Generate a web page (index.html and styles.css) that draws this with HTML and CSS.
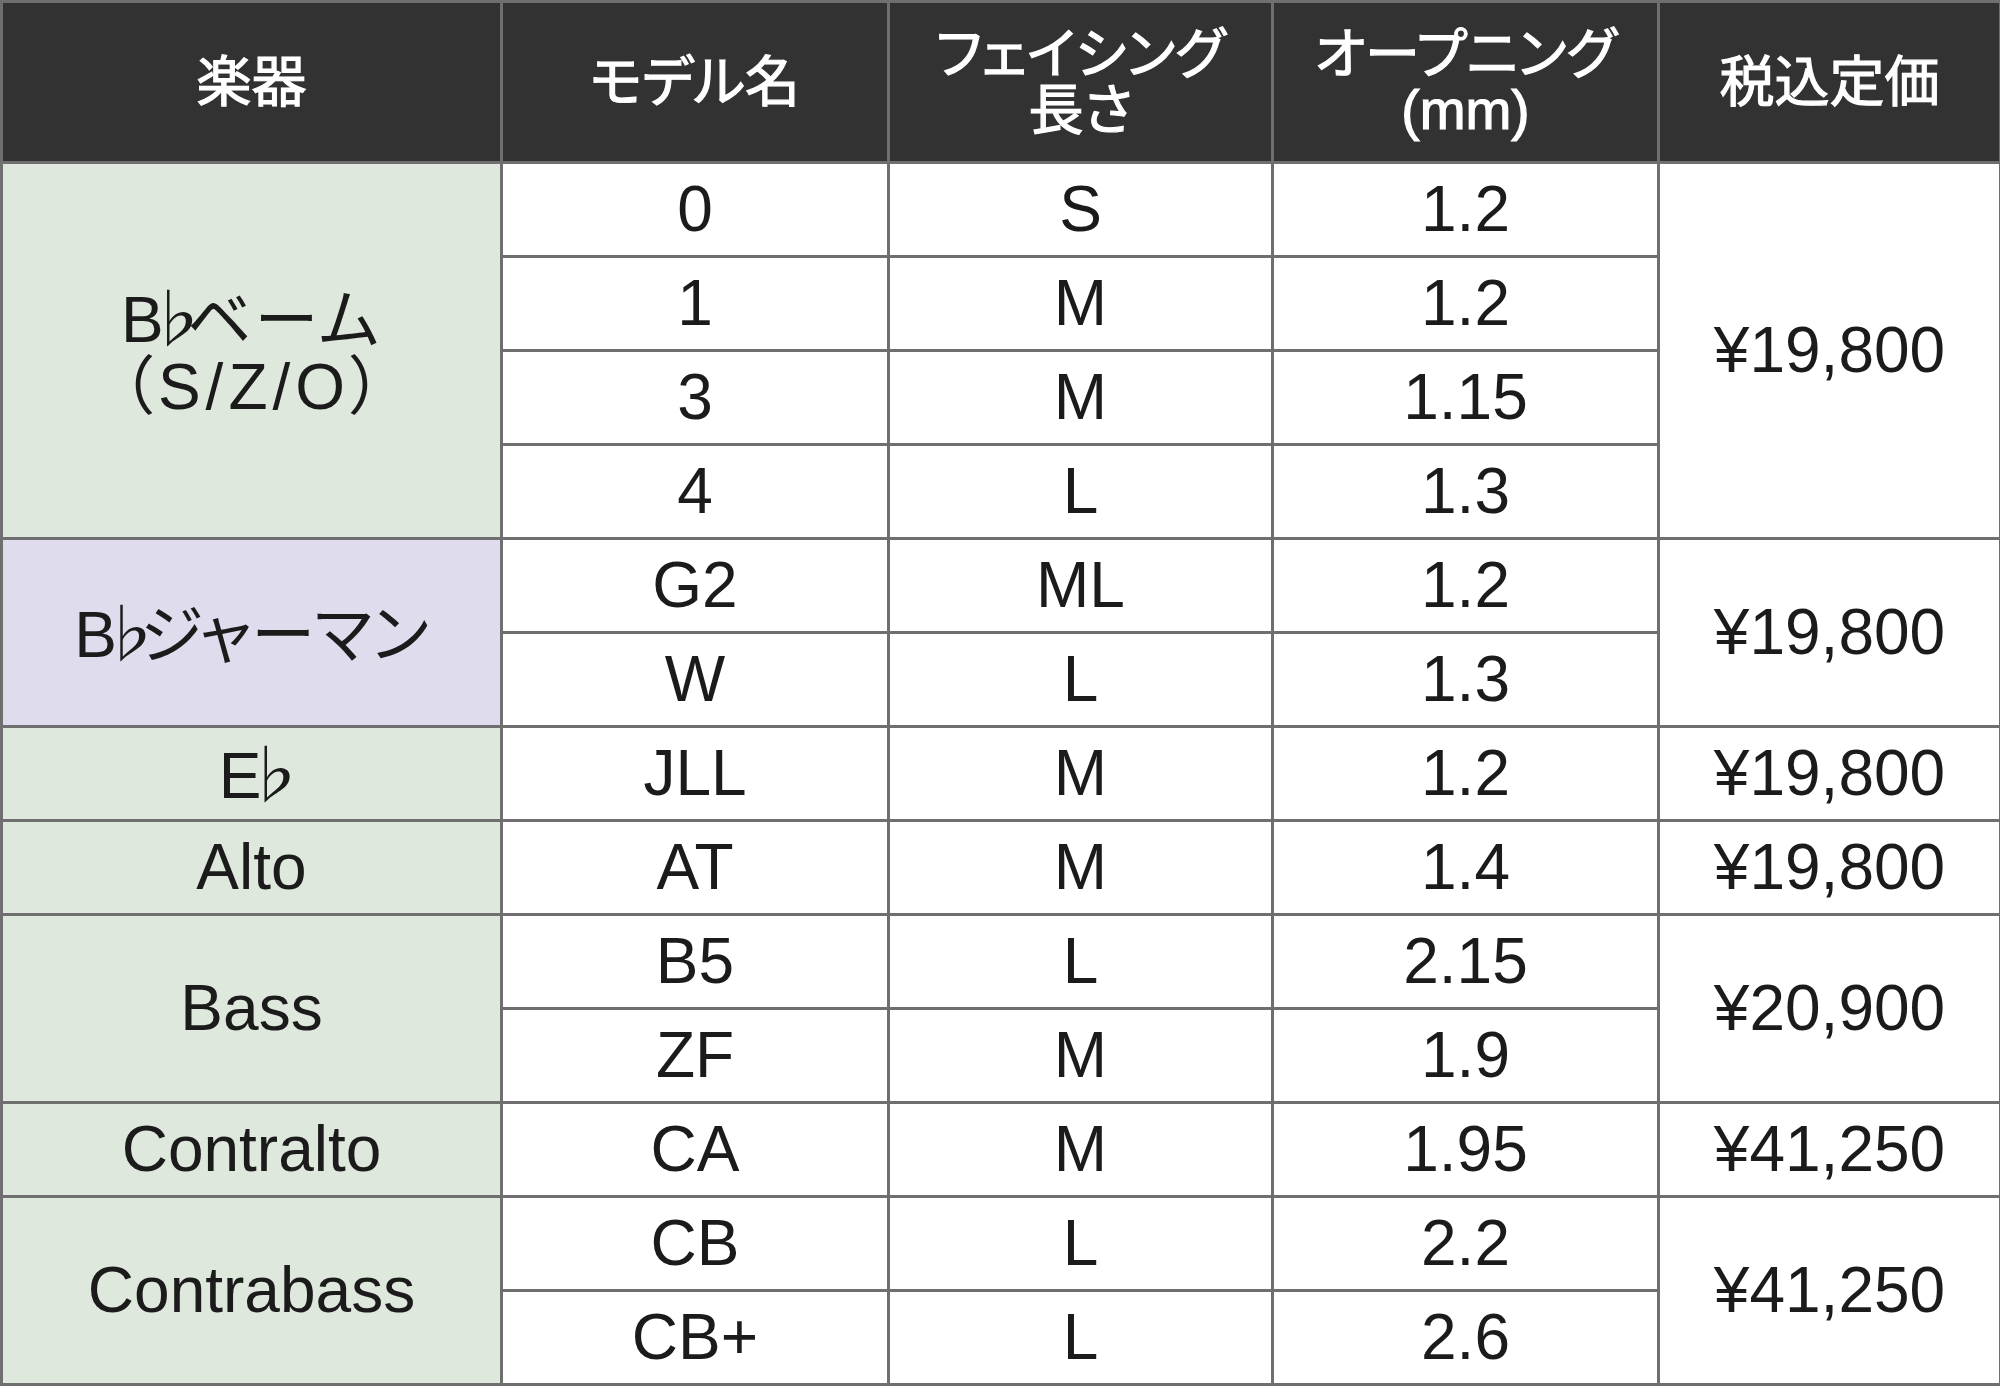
FILE: index.html
```html
<!DOCTYPE html>
<html lang="ja">
<head>
<meta charset="utf-8">
<title>マウスピース一覧</title>
<link rel="stylesheet" href="styles.css">
</head>
<body>
<table class="spec">
  <colgroup>
    <col class="c1"><col class="c2"><col class="c3"><col class="c4"><col class="c5">
  </colgroup>
  <thead>
    <tr class="head">
      <th>楽器</th>
      <th>モデル名</th>
      <th>フェイシング<br>長さ</th>
      <th>オープニング<br><span class="lat">(mm)</span></th>
      <th>税込定価</th>
    </tr>
  </thead>
  <tbody>
    <tr>
      <td rowspan="4" class="inst green"><span class="key">B</span><span class="flat">♭</span><span class="kana">ベーム</span><br><span class="paren">（S/Z/O）</span></td>
      <td>0</td><td>S</td><td>1.2</td>
      <td rowspan="4">¥19,800</td>
    </tr>
    <tr><td>1</td><td>M</td><td>1.2</td></tr>
    <tr><td>3</td><td>M</td><td>1.15</td></tr>
    <tr><td>4</td><td>L</td><td>1.3</td></tr>
    <tr>
      <td rowspan="2" class="inst purple"><span class="key">B</span><span class="flat">♭</span>ジャーマン</td>
      <td>G2</td><td>ML</td><td>1.2</td>
      <td rowspan="2">¥19,800</td>
    </tr>
    <tr><td>W</td><td>L</td><td>1.3</td></tr>
    <tr>
      <td class="inst green"><span class="key">E</span><span class="flat">♭</span></td>
      <td>JLL</td><td>M</td><td>1.2</td><td>¥19,800</td>
    </tr>
    <tr>
      <td class="inst green">Alto</td>
      <td>AT</td><td>M</td><td>1.4</td><td>¥19,800</td>
    </tr>
    <tr>
      <td rowspan="2" class="inst green">Bass</td>
      <td>B5</td><td>L</td><td>2.15</td>
      <td rowspan="2">¥20,900</td>
    </tr>
    <tr><td>ZF</td><td>M</td><td>1.9</td></tr>
    <tr>
      <td class="inst green">Contralto</td>
      <td>CA</td><td>M</td><td>1.95</td><td>¥41,250</td>
    </tr>
    <tr>
      <td rowspan="2" class="inst green">Contrabass</td>
      <td>CB</td><td>L</td><td>2.2</td>
      <td rowspan="2">¥41,250</td>
    </tr>
    <tr><td>CB+</td><td>L</td><td>2.6</td></tr>
  </tbody>
</table>
</body>
</html>
```
FILE: styles.css
```css
html, body {
  margin: 0;
  padding: 0;
  background: #ffffff;
}

.spec {
  border-collapse: collapse;
  table-layout: fixed;
  width: 1999px;
  border: 3px solid #6f6f6f;
  font-family: "Liberation Sans", "Noto Sans CJK JP", sans-serif;
  font-feature-settings: "palt";
  color: #1b1b1b;
}

.c1 { width: 500px; }
.c2 { width: 387px; }
.c3 { width: 384px; }
.c4 { width: 386px; }
.c5 { width: 342px; }

.spec th,
.spec td {
  border: 3px solid #6f6f6f;
  text-align: center;
  vertical-align: middle;
  padding: 0;
}

.head {
  height: 161px;
}

.head th {
  background: #323232;
  color: #ffffff;
  font-family: "Liberation Sans", "Noto Sans CJK JP", sans-serif;
  font-weight: 400;
  font-size: 55px;
  line-height: 56px;
  -webkit-text-stroke: 1.2px #ffffff;
}

.spec tbody tr {
  height: 94px;
}

.spec td {
  font-size: 64px;
  line-height: 67px;
  font-weight: 400;
}

.green {
  background: #dfe8dd;
}

.purple {
  background: #dfdcee;
}

.key {
  letter-spacing: -19px;
}

.flat {
  font-family: "Noto Sans CJK JP", sans-serif;
  font-weight: 400;
  letter-spacing: -22px;
}

.kana {
  letter-spacing: 3px;
}

.paren {
  letter-spacing: 5px;
  margin-right: -5px;
}
```
